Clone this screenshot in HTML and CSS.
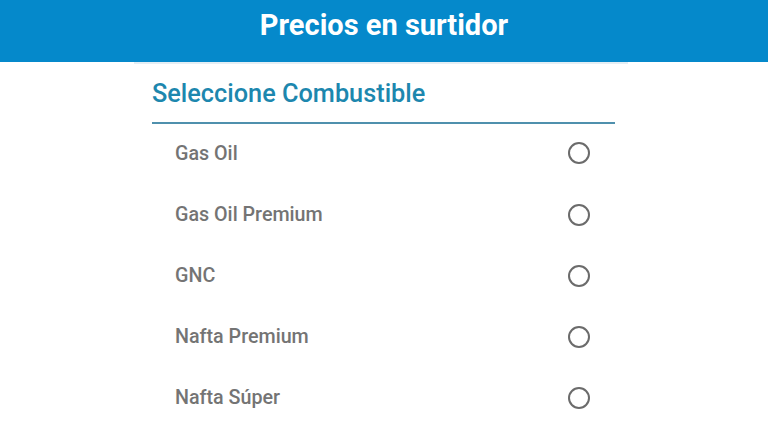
FILE: index.html
```html
<!DOCTYPE html>
<html lang="es">
<head>
<meta charset="utf-8">
<link rel="stylesheet" href="styles.css">
</head>
<body>
<header class="topbar"><h1 class="topbar-title">Precios en surtidor</h1></header>
<main class="dialog">
  <h2 class="dialog-title">Seleccione Combustible</h2>
  <ul class="options">
    <li class="option"><span class="option-label">Gas Oil</span><span class="radio"></span></li>
    <li class="option"><span class="option-label">Gas Oil Premium</span><span class="radio"></span></li>
    <li class="option"><span class="option-label">GNC</span><span class="radio"></span></li>
    <li class="option"><span class="option-label">Nafta Premium</span><span class="radio"></span></li>
    <li class="option"><span class="option-label">Nafta Súper</span><span class="radio"></span></li>
  </ul>
</main>
</body>
</html>
```

FILE: styles.css
```css
html, body {
  margin: 0;
  padding: 0;
  background: #ffffff;
  font-family: Roboto, "Liberation Sans", sans-serif;
  width: 768px;
  height: 432px;
  overflow: hidden;
}
.topbar {
  height: 62px;
  background: #0589cb;
  display: flex;
  align-items: center;
  justify-content: center;
}
.topbar-title {
  margin: 0 0 12px 0;
  color: #ffffff;
  font-size: 29px;
  font-weight: 700;
  line-height: 34px;
}
.dialog {
  width: 494px;
  margin: 0 0 0 134px;
  background: #ffffff;
  border-top: 2px solid #e4eef4;
  padding: 13px 13px 0 18px;
  box-sizing: border-box;
}
.dialog-title {
  margin: 0;
  padding: 0 0 12px 0;
  font-size: 25.3px;
  font-weight: 500;
  color: #1d87ae;
  border-bottom: 2px solid #4f90ad;
  line-height: 33px;
}
.options {
  list-style: none;
  margin: 0;
  padding: 0;
}
.option {
  height: 61px;
  display: flex;
  align-items: center;
  justify-content: space-between;
  padding: 0 25px 0 23px;
}
.option:first-child {
  height: 62px;
  margin-top: -2px;
}
.option-label {
  font-size: 19.7px;
  font-weight: 500;
  color: #747474;
}
.radio {
  width: 18px;
  height: 18px;
  border: 2px solid #6b6b6b;
  border-radius: 50%;
}
```
